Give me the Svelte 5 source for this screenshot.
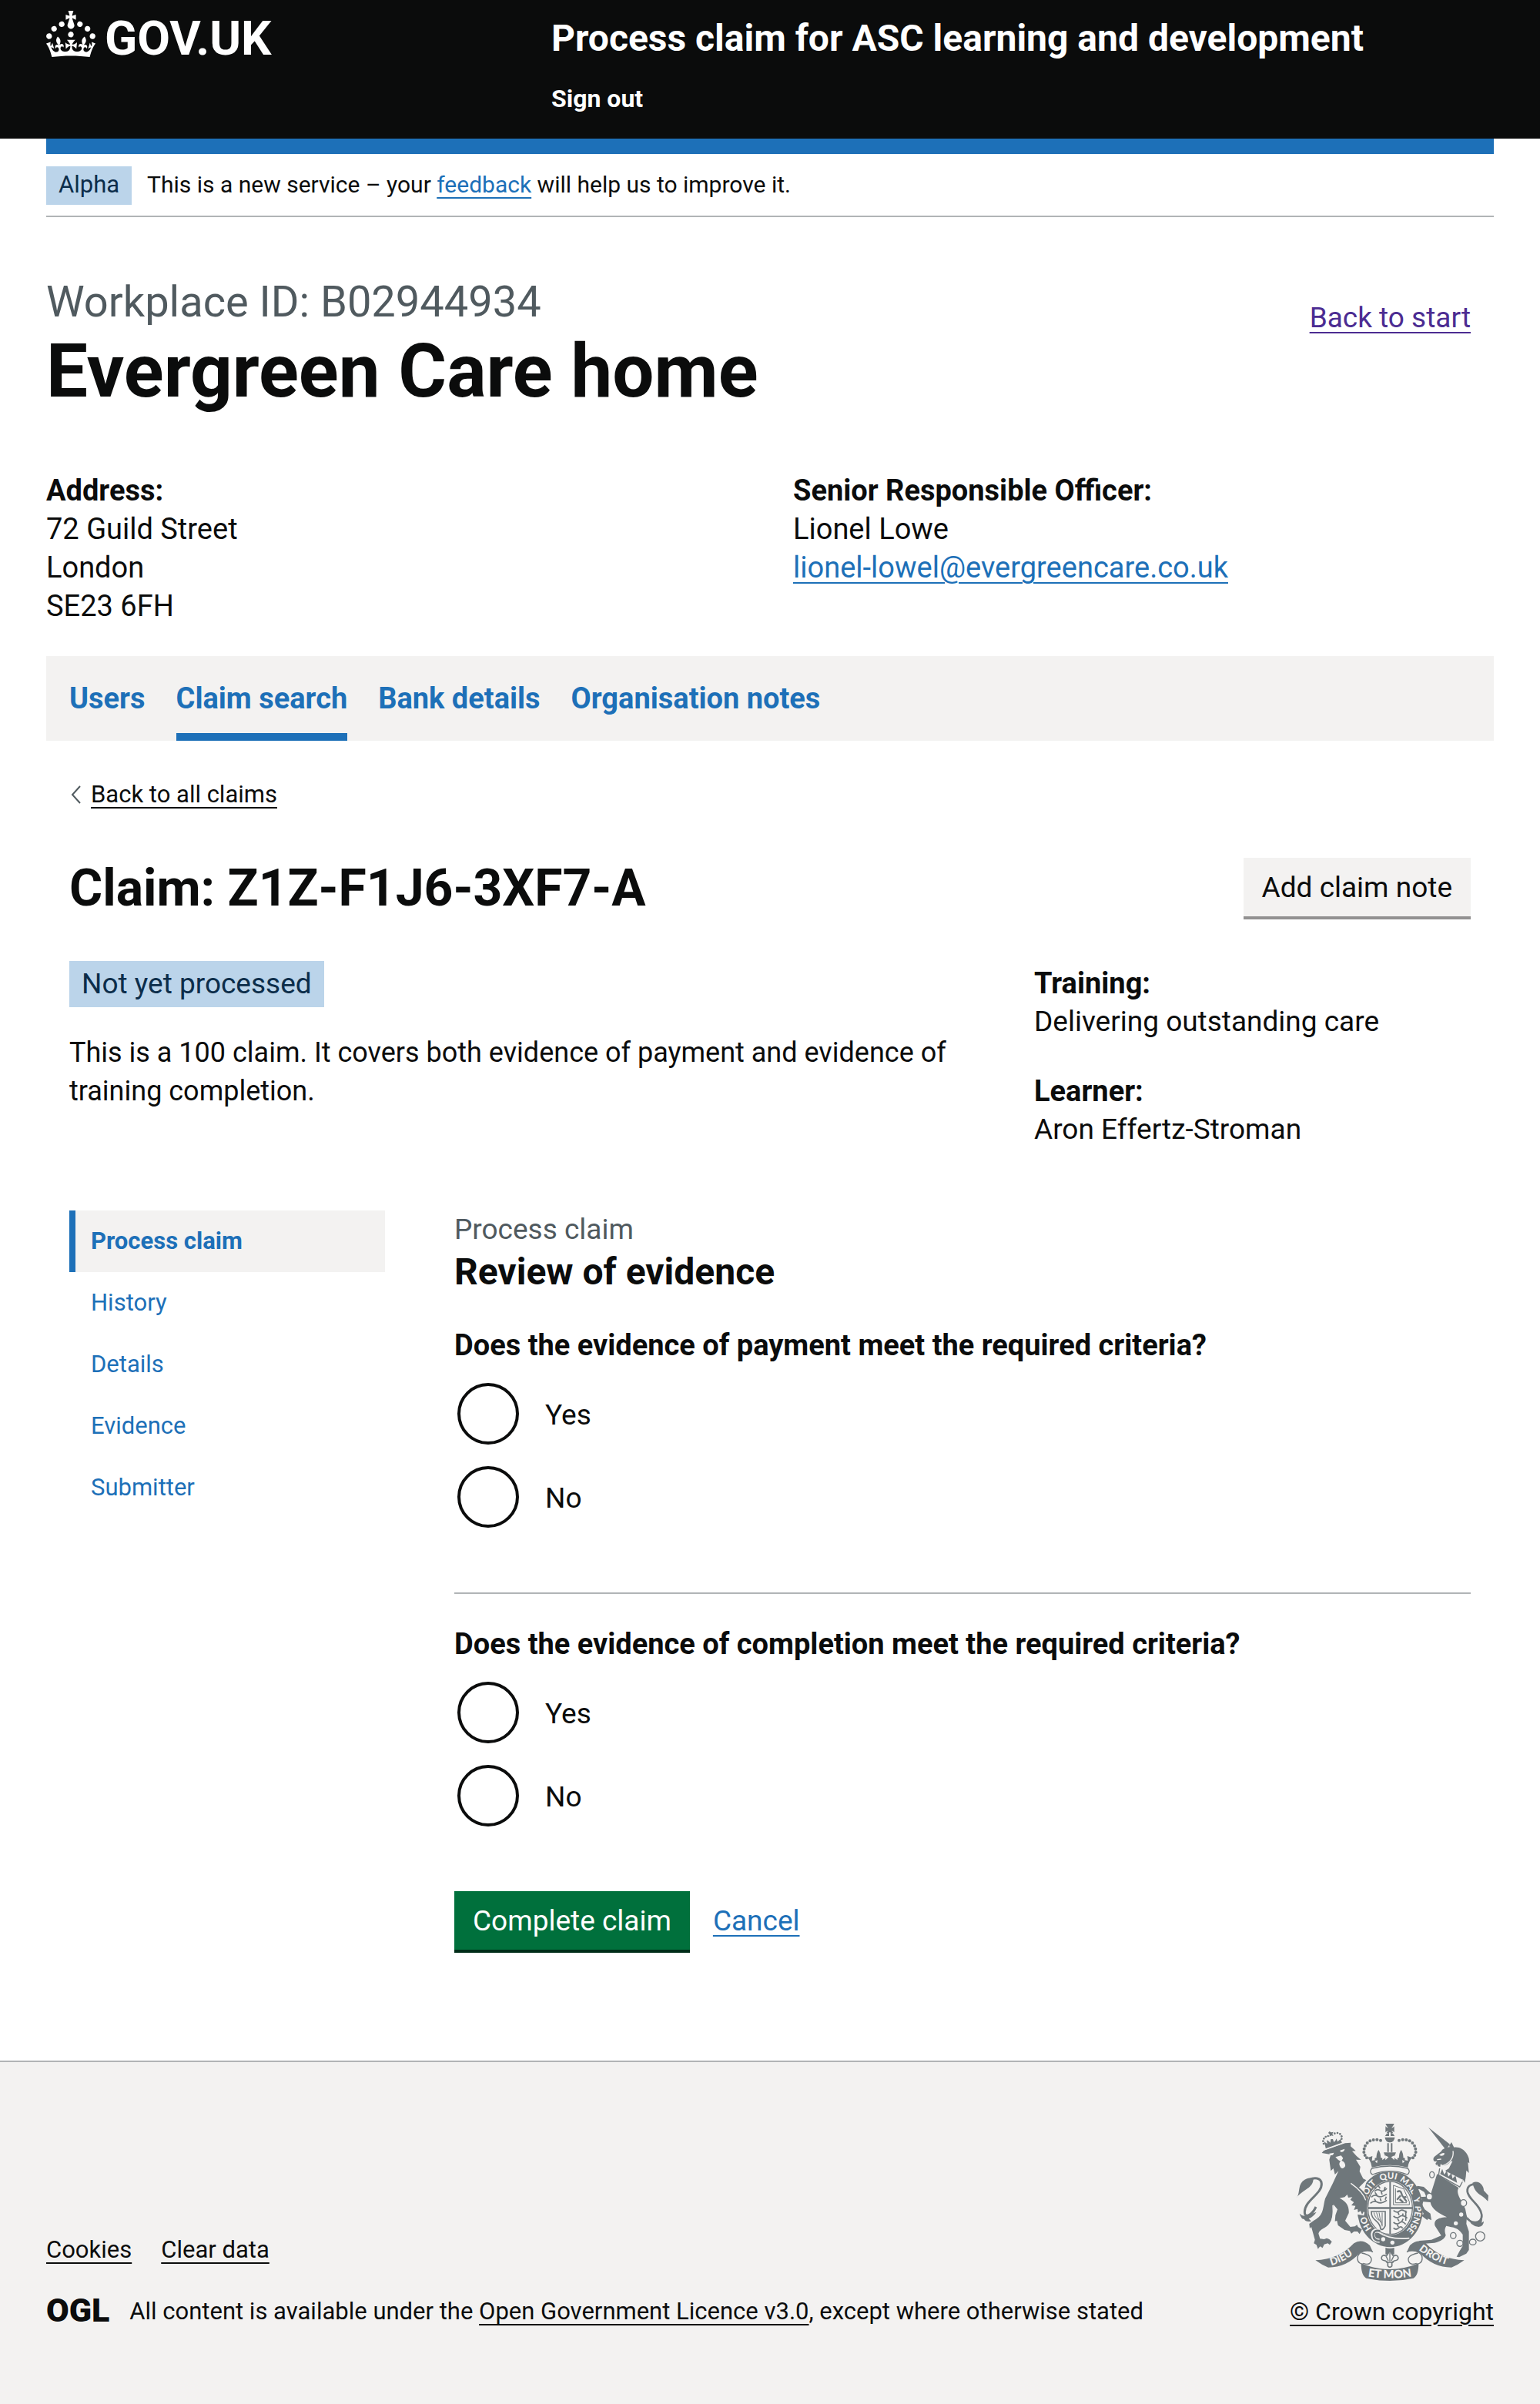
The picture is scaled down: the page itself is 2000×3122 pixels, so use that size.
<script>
  const sections = ['Users', 'Claim search', 'Bank details', 'Organisation notes'];
  const pages = ['Process claim', 'History', 'Details', 'Evidence', 'Submitter'];
  const questions = [
    { name: 'payment', text: 'Does the evidence of payment meet the required criteria?' },
    { name: 'completion', text: 'Does the evidence of completion meet the required criteria?' }
  ];
  const options = ['Yes', 'No'];
  const motto = [['HO', 83], ['SOIT', 199], ['QUI', 295], ['MAL', 370], ['Y', 459], ['PENSE', 490]];
  const beads = [[402, 119], [388, 116], [374, 117], [361, 121], [350, 129], [342, 140], [338, 152], [337, 165], [341, 177], [348, 187]];
  const smallBeads = [[180, 132], [178, 122], [181, 112], [188, 105], [197, 102], [223, 92], [234, 90], [244, 94], [250, 103], [250, 113]];
</script>

<header class="top">
  <a class="logo" href="#gov">
    <svg viewBox="0 0 32 30" width="64" height="60" aria-hidden="true">
      <path fill="currentColor" d="M22.6 10.4c-1 .4-2-.1-2.4-1-.4-.9.1-2 1-2.4.9-.4 2 .1 2.4 1s-.1 2-1 2.4m-5.9 6.7c-.9.4-2-.1-2.4-1-.4-.9.1-2 1-2.4.9-.4 2 .1 2.4 1s-.1 2-1 2.4m10.8-3.7c-1 .4-2-.1-2.4-1-.4-.9.1-2 1-2.4.9-.4 2 .1 2.4 1s0 2-1 2.4m3.3 4.8c-1 .4-2-.1-2.4-1-.4-.9.1-2 1-2.4.9-.4 2 .1 2.4 1s-.1 2-1 2.4M17 4.7l2.3 1.2V2.5l-2.3.7-.2-.2.9-3h-3.4l.9 3-.2.2c-.1.1-2.3-.7-2.3-.7v3.4L15 4.7c.1.1.1.2.2.2l-1.3 4c-.1.2-.1.4-.1.6 0 1.1.8 2 1.9 2.2h.7c1-.2 1.9-1.1 1.9-2.1 0-.2 0-.4-.1-.6l-1.3-4c-.1-.2 0-.2.1-.3m-7.6 5.7c.9.4 2-.1 2.4-1 .4-.9-.1-2-1-2.4-.9-.4-2 .1-2.4 1s0 2 1 2.4m-5 3c.9.4 2-.1 2.4-1 .4-.9-.1-2-1-2.4-.9-.4-2 .1-2.4 1s.1 2 1 2.4m-3.2 4.8c.9.4 2-.1 2.4-1 .4-.9-.1-2-1-2.4-.9-.4-2 .1-2.4 1s0 2 1 2.4m14.8 11c4.4 0 8.6.3 12.3.8 1.1-4.5 2.4-7 3.7-8.8l-2.5-.9c.2 1.3.3 1.9 0 2.7-.4-.4-.8-1.1-1.1-2.3l-1.2 4c.7-.5 1.3-.8 2-.9-1.1 2.5-2.6 3.1-3.5 3-1.1-.2-1.7-1.2-1.5-2.1.3-1.2 1.5-1.5 2.1-.1 1.1-2.3-.8-3-2-2.3 1.9-1.9 2.1-3.5.6-5.6-2.1 1.6-2.1 3.2-1.2 5.5-1.2-1.4-3.2-.6-2.5 1.6.9-1.4 2.1-.5 1.9.8-.2 1.1-1.7 2.1-3.5 1.9-2.7-.2-2.9-2.1-2.9-3.6.7-.1 1.9.5 2.9 1.9l.4-4.3c-1.1 1.1-2.1 1.4-3.2 1.4.4-1.2 2.1-3 2.1-3h-5.4s1.7 1.9 2.1 3c-1.1 0-2.1-.2-3.2-1.4l.4 4.3c1-1.4 2.2-2 2.9-1.9-.1 1.5-.2 3.4-2.9 3.6-1.9.2-3.4-.8-3.5-1.9-.2-1.3 1-2.2 1.9-.8.7-2.3-1.2-3-2.5-1.6.9-2.2.9-3.9-1.2-5.5-1.5 2-1.3 3.7.6 5.6-1.2-.7-3.1 0-2 2.3.6-1.4 1.8-1.1 2.1.1.2.9-.3 1.9-1.5 2.1-.9.2-2.4-.5-3.5-3 .6 0 1.2.3 2 .9l-1.2-4c-.3 1.1-.7 1.9-1.1 2.3-.3-.8-.2-1.4 0-2.7l-2.9.9C1.3 23 2.6 25.5 3.7 30c3.7-.5 7.9-.8 12.3-.8" />
    </svg>
    <span>GOV.UK</span>
  </a>
  <div class="service">
    <a class="service-name" href="#service">Process claim for ASC learning and development</a>
    <a class="sign-out" href="#sign-out">Sign out</a>
  </div>
</header>

<div class="page">
  <div class="bar"></div>
  <div class="phase">
    <strong class="tag small">Alpha</strong>
    <span>This is a new service – your <a class="link" href="#feedback">feedback</a> will help us to improve it.</span>
  </div>

  <main>
    <div class="org">
      <div>
        <span class="org-id">Workplace ID: B02944934</span>
        <h1>Evergreen Care home</h1>
      </div>
      <a class="link visited" href="#start">Back to start</a>
    </div>

    <div class="contacts">
      <div>
        <strong>Address:</strong>
        <address>72 Guild Street<br />London<br />SE23 6FH</address>
      </div>
      <div>
        <strong>Senior Responsible Officer:</strong>
        <p>Lionel Lowe</p>
        <a class="link" href="#email">lionel-lowel@evergreencare.co.uk</a>
      </div>
    </div>

    <nav class="tabs" aria-label="Organisation">
      {#each sections as section}
        <a href="#section" class:active={section === 'Claim search'}>{section}</a>
      {/each}
    </nav>

    <div class="claim">
      <a class="back" href="#claims">
        <svg viewBox="0 0 16 24" width="16" height="24" aria-hidden="true"><path d="M14 1 4 12l10 11" fill="none" stroke="#505a5f" stroke-width="2" /></svg>
        <span>Back to all claims</span>
      </a>

      <div class="claim-head">
        <h2>Claim: Z1Z-F1J6-3XF7-A</h2>
        <button type="button" class="secondary">Add claim note</button>
      </div>

      <div class="summary">
        <div>
          <strong class="tag">Not yet processed</strong>
          <p class="about">This is a 100 claim. It covers both evidence of payment and evidence of training completion.</p>
        </div>
        <dl>
          <div><dt>Training:</dt><dd>Delivering outstanding care</dd></div>
          <div><dt>Learner:</dt><dd>Aron Effertz-Stroman</dd></div>
        </dl>
      </div>

      <div class="work">
        <nav class="side" aria-label="Claim">
          {#each pages as page}
            <a href="#page" class:active={page === 'Process claim'}>{page}</a>
          {/each}
        </nav>

        <form onsubmit={(e) => e.preventDefault()}>
          <span class="caption">Process claim</span>
          <h3>Review of evidence</h3>
          {#each questions as q}
            <fieldset>
              <legend>{q.text}</legend>
              <div class="radios">
                {#each options as option}
                  <div class="radio">
                    <input type="radio" id="{q.name}-{option}" name={q.name} value={option} />
                    <label for="{q.name}-{option}">{option}</label>
                  </div>
                {/each}
              </div>
            </fieldset>
          {/each}
          <div class="actions">
            <button type="submit">Complete claim</button>
            <a class="link" href="#cancel">Cancel</a>
          </div>
        </form>
      </div>
    </div>
  </main>
</div>

<footer>
  <div class="meta">
    <div class="meta-links">
      <a href="#cookies">Cookies</a>
      <a href="#clear">Clear data</a>
    </div>
    <div class="licence">
      <span class="ogl">OGL</span>
      <span>All content is available under the <a href="#licence">Open Government Licence v3.0</a>, except where otherwise stated</span>
    </div>
  </div>
  <a class="copyright" href="#copyright">
    <svg class="crest" viewBox="72 54 750 612" width="250" height="204" aria-hidden="true">
      <defs>
        <path id="garter" d="M439 499A97 115 0 0 1 342 384A97 115 0 0 1 439 269A97 115 0 0 1 536 384A97 115 0 0 1 439 499" />
        <path id="scroll-mid" d="M346 648Q438 664 530 648" />
        <path id="scroll-left" d="M210 606Q264 592 318 546" />
        <path id="scroll-right" d="M550 546Q604 590 684 610" />
      </defs>
      <g class="ink">
        <!-- garter and shield -->
        <ellipse cx="439" cy="386" rx="128" ry="149" />
        <ellipse class="paper" cx="439" cy="382" rx="91" ry="107" />
        <ellipse class="line" cx="439" cy="382" rx="87" ry="103" stroke-width="4" />
        <path d="M436 280h6v205h-6zM352 379h175v7H352z" />
        <path class="line" stroke-width="5" d="M378 318q10-12 22-4t26-8M384 308l-6-10M400 306l-8-12M420 300l-4 12M366 340q12-12 24-4t36-8M388 332l-8-10M408 330l-4-12M362 364q14-12 28-4t36-8M384 358l-6-12M404 356l-4-12M420 350l4-12" />
        <path class="line" stroke-width="5" d="M452 392q14 12 24 2t28 6M452 414q14 12 24 2t30 6M452 438q14 12 24 2t24 6M452 460q10 10 20 0t16 2M470 400l4 10M490 404l-4 10M468 424l6 10M490 424l-6 12M466 448l6 8M500 392v40" />
        <path class="line" stroke-width="3" d="M452 294l40 14 22 50v12h-62zM460 306v56h44" />
        <path class="line" stroke-width="7" d="M466 320q14-10 18 8t18 10M480 334l-14 16M492 342l12 16M476 348l14 12" />
        <path class="line" stroke-width="5" d="M366 396h54v56q-10 20-18 12c-2-36-38-30-36-68z" />
        <path class="line" stroke-width="3" d="M376 400q4 22 20 30M386 400q4 22 18 40M396 400q2 22 12 50M408 400v54" />
        <!-- garter buckle -->
        <path class="cutline" stroke-width="5" d="M392 476q46 32 122 24" />
        <path class="cutline" stroke-width="16" d="M398 472q-28-6-26 16t26 22" />
        <path class="line" stroke-width="8" d="M400 472q-26-6-26 16t26 22" />
        <circle class="paper" cx="412" cy="504" r="8" /><circle class="paper" cx="448" cy="517" r="8" />
        {#each motto as [word, offset]}
          <text class="cut" font-size="34"><textPath href="#garter" startOffset={offset}>{word}</textPath></text>
        {/each}

        <!-- crown -->
        <path d="M421 54h34q-8 16-12 17 10-1 12-7v24q-4-6-12-7 4 1 8 10h-26q4-9 8-10-8 1-12 7V64q4 6 12 7-4-1-12-17z" />
        <circle cx="438" cy="108" r="19" />
        <path class="paper" d="M418 102h40v5h-40zM435 88h6v18h-6z" />
        <path d="M428 130h6v34h-6zM442 130h6v34h-6z" />
        {#each beads as [x, y]}
          <circle cx={x} cy={y} r="6" /><circle cx={876 - x} cy={y} r="6" />
        {/each}
        <path d="M352 186l18-6-2 18 12-2q-4-10 6-10-2-14 8-30 10 16 8 30 10 0 6 10l14-10-8-20h48l-8 20 14 10q-4-10 6-10-2-14 8-30 10 16 8 30 10 0 6 10l12 2-2-18 18 6q-14 18-16 38-70-18-140 0-2-20-16-38z" />
        <path class="paper" d="M420 178l13 6-12 12zM456 178l-13 6 12 12zM380 200l10-4-2 12zM496 200l-10-4 2 12z" />
        <path class="paper" d="M368 228q70-18 140 0 12 14-4 26-66-26-132 0-16-12-4-26z" />
        <path class="line" stroke-width="4" d="M368 228q70-18 140 0 12 14-2 24-66-26-136 0-14-10-2-24z" />

        <!-- lion -->
        <path class="halo" d="M345 268l-30 32q30 40 26 70l-8 36-24-4z" />
        <path d="M173 168l8-10 82-28 23-2-1 14 20 18-14 1 18 20 17 14-20-1 17 28-3 18 14 28 12 6-28 28c14 12 32 26 32 52l-2 30-4 22-8-10-6 12-6-14-10 6-2-14-14 4 6-16-16-2 10-12-14-10 8-10-16 2-4-12-10 10-20 4c26 12 38 30 36 58l-14 30 20 24 18-2 8-6 4 8 15 10-9 18-8-10-14 0-10 8-6-10-20-4-26-18-4-18-8 2 2-24 8-22-16-20c0 34-2 54-14 72-16 24-40 22-44 42l6 20 16 2 10-4 10 4 10 10-8 12-8-6-14 4-6 14-10-6-8 10-6-16-10-6 4-14-14-50-6 6-2-18 20-14c38-20 32-48 42-84l30-60 22-48-14 14-6-24-10 10-6-44 6-20z" />
        <path class="paper" d="M202 170l18-3q-3 14-16 9zM244 158l18-6q-2 14-16 12zM226 184l22-6 8 10-6 10q16 6 14 22-8 14-18 4-10-14 0-24-8-2-20-16z" />
        <path class="cutline" stroke-width="4" d="M286 286q48 34 58 66M216 372q4 50-10 74" />
        <path class="line" stroke-width="9" d="M150 378c-14 30-44 48-44 20 0-46 68-70 66-110-2-26-30-24-48-16" />
        <path d="M72 344c18-14 6-46 26-66 20-16 34-14 42-8-2 36-38 38-68 74zM86 404q14 14 32 6l34-12q-12 18-30 26l10 10q-22 4-28-8l-8-2q-6-8-10-20z" />
        <!-- lion crown -->
        <path d="M182 124l12 8-2-14 8 4 6 6 2-14h8l4 12 6-6 4-8 4 12 12-10 6 16-63 23z" />
        <path class="cutline" stroke-width="4" d="M180 156l84-30" />
        <path d="M202 84l8 4 8-2-4 8 4 8-8-2-8 4 2-8-6-6z" />
        {#each smallBeads as [x, y]}<circle cx={x} cy={y} r="4" />{/each}

        <!-- unicorn -->
        <path d="M588 68l84 66-14 18-8-4z" />
        <path d="M668 142l10-16 10 20c34-4 54 26 58 44l2 18-6-4 4 42-10-10-2 24-4 24-8-14-2 16-74-44 22-14 14-28q-8-2-14 8c-10 10-24 12-32 2l-2 12-8-2-4-8-4 4-2-8 6-6-12-2q-6-10 2-18l26-20q6-14 36-18z" />
        <path class="paper" d="M630 176q14-12 22-6-6 14-22 6z" />
        <path class="cutline" stroke-width="4" d="M684 160q6 40-42 58M622 194l16-2" />
        <path class="paper" d="M630 226l92 46-10 28-88-48z" />
        <path class="line" stroke-width="4" d="M632 228l-4 26 82 46 10-18" />
        <path d="M634 250l8-20 8 22 10-14 6 22 12-14 4 22 12-12 6 28z" />
        <path d="M622 250l84 54c-14 22 16 54 26 82l6 30-2 28 10 30v72l-10 14-28 14-10-2 12-22 12-20v-44c-20-30-34-26-64-34-8 12-6 24-2 36-4 14-20 24-44 30l-48 4-14 14-20-2 12-16 12-8 46-4 38-16-24-38c-8-26 20-32 46-34-30-14-60-32-64-58l-28-2-4 12 10 18 22 16 4 26-14-6-2 6-16-12-8-8 10-4-22-46 16-12-10-8 26-2-8-18-20-12-14 10-10 2 2-12 16-12 24 4 28 26z" />
        <path class="line" stroke-width="8" d="M730 410c20 40 68 36 66 0-4-40-52-60-56-92-2-28 26-32 44-24" />
        <path d="M760 284c26-12 44 12 44 30l18 20-2 22c-28-32-48-22-60-72zM742 418q14 22 34 20l22-14-2 16 8-6q0 18-20 22-36-4-42-38z" />
        <ellipse class="ring" cx="602" cy="253" rx="9" ry="12" /><ellipse class="ring" cx="592" cy="338" rx="12" ry="13" />
        <ellipse class="ring" cx="725" cy="363" rx="12" ry="13" /><ellipse class="ring" cx="685" cy="490" rx="11" ry="12" />
        <circle class="ring" cx="711" cy="520" r="12" /><ellipse class="ring" cx="761" cy="515" rx="13" ry="11" /><circle class="ring" cx="790" cy="493" r="18" />
        <circle class="paper" cx="716" cy="408" r="8" /><circle class="paper" cx="695" cy="442" r="8" /><circle class="paper" cx="576" cy="282" r="6" />

        <!-- scrolls -->
        <path d="M148 586q90-2 150-66 30-20 62 8l12 26q-28-8-52 4-50 56-122 56-26-10-50-28z" />
        <path d="M728 586q-90-2-150-66-30-20-62 8l-12 26q28-8 52 4 50 56 122 56 26-10 50-28z" />
        <path class="line" stroke-width="4" d="M372 554c-18-14-60-2-60 24 0 18 14 24 22 22M328 558c30 6 44 16 36 34q-6 14-30 6" />
        <path class="line" stroke-width="4" d="M504 554c18-14 60-2 60 24 0 18-14 24-22 22M548 558c-30 6-44 16-36 34q6 14 30 6" />
        <path d="M326 598q112 46 224 0 0 48-20 58-92 20-184 0-20-10-20-58z" />
        <text class="cut" font-size="40"><textPath href="#scroll-left">DIEU</textPath></text>
        <text class="cut" font-size="40"><textPath href="#scroll-right">DROIT</textPath></text>
        <text class="cut" font-size="44"><textPath href="#scroll-mid" startOffset="50%" text-anchor="middle">ET MON</textPath></text>
        <!-- badge -->
        <path d="M421 537q16 6 34 0v26h-34z" />
        <path class="paper line" stroke-width="5" d="M438 550l14 20q14-8 18 4t-14 14l-10 6v14q-8 10-16 0v-14l-10-6q-18-2-14-14t18-4z" />
        <path class="line" stroke-width="4" d="M438 556v34M424 572l8 16M452 572l-8 16M424 594h28" />
      </g>
    </svg>
    <span>© Crown copyright</span>
  </a>
</footer>

<style>
  :global(body) {
    background: #f3f2f1;
    color: #0b0c0c;
    font-family: Roboto, 'Liberation Sans', sans-serif;
    font-size: 37px;
    line-height: 50px;
  }
  h1, h2, h3, p, dl, dd, fieldset, legend { margin: 0; padding: 0; border: 0; }
  address { font-style: normal; }
  a { color: inherit; }
  .top {
    display: grid;
    grid-template-columns: 656fr 1224fr;
    padding: 14px 60px 32px;
    background: #0b0c0c;
    color: #fff;
  }
  .top a { text-decoration: none; font-weight: 700; }
  .logo { display: flex; align-items: flex-end; gap: 12px; height: 60px; font-size: 62px; line-height: 48px; }
  .service { display: flex; flex-direction: column; align-items: flex-start; gap: 28px; padding-top: 6px; }
  .service-name { font-size: 48px; line-height: 60px; }
  .sign-out { font-size: 32px; line-height: 40px; }
  .page { padding: 0 60px 140px; background: #fff; }
  .bar { height: 20px; background: #1d70b8; }
  .phase {
    display: flex;
    gap: 20px;
    padding: 16px 0 14px;
    border-bottom: 2px solid #b1b4b6;
    font-size: 30px;
    line-height: 48px;
  }
  strong, dt, legend { font-size: 38px; font-weight: 700; }
  strong { display: block; }
  .tag {
    width: max-content;
    padding: 0 16px;
    background: #bbd4ea;
    color: #0c2d4a;
    font-size: 37px;
    font-weight: 400;
    line-height: 60px;
  }
  .tag.small { padding-bottom: 2px; font-size: 31px; line-height: 48px; }
  .link, .back span, footer a {
    text-decoration: underline;
    text-decoration-thickness: 2px;
    text-underline-offset: 6px;
  }
  .link { color: #1d70b8; }
  .visited { color: #4c2c92; }

  .org { display: flex; justify-content: space-between; padding-top: 80px; }
  .org-id { display: block; margin-bottom: 10px; color: #505a5f; font-size: 56px; line-height: 60px; }
  h1 { font-size: 96px; line-height: 100px; }
  .org .link { margin: 26px 30px 0 0; }
  .contacts {
    display: grid;
    grid-template-columns: 1fr 1fr;
    gap: 60px;
    padding: 80px 0 40px;
    font-size: 38px;
  }

  .tabs { display: flex; gap: 40px; padding: 0 30px; background: #f3f2f1; }
  .tabs a { color: #1d70b8; font-size: 38px; font-weight: 700; line-height: 110px; text-decoration: none; }
  .tabs .active { box-shadow: inset 0 -10px #1d70b8; }

  .claim { padding: 50px 30px 0; }
  .back { display: flex; align-items: center; gap: 12px; width: max-content; font-size: 31px; line-height: 40px; text-decoration: none; }
  .claim-head { display: flex; justify-content: space-between; align-items: flex-start; margin: 62px 0 54px; }
  h2 { font-size: 66px; line-height: 80px; }
  button {
    padding: 2px 24px 0;
    border: 0;
    border-bottom: 4px solid #002d18;
    background: #00703c;
    color: #fff;
    font: inherit;
    line-height: 74px;
  }
  .secondary { border-color: #929191; background: #f3f2f1; color: #0b0c0c; }
  .summary { display: grid; grid-template-columns: 1193fr 567fr; gap: 60px; margin-bottom: 80px; }
  .about { margin-top: 34px; font-size: 36px; }
  dl { display: flex; flex-direction: column; gap: 40px; padding-top: 4px; }

  .work { display: grid; grid-template-columns: 410fr 1320fr; gap: 90px; }
  .side { display: flex; flex-direction: column; }
  .side a {
    padding-left: 20px;
    border-left: 8px solid transparent;
    color: #1d70b8;
    font-size: 31px;
    line-height: 80px;
    text-decoration: none;
  }
  .side .active { border-color: #1d70b8; background: #f3f2f1; font-weight: 700; }
  .caption { display: block; color: #505a5f; }
  h3 { margin-bottom: 40px; font-size: 48px; line-height: 60px; }
  fieldset { min-width: 0; }
  fieldset + fieldset { margin-top: 80px; padding-top: 40px; border-top: 2px solid #b1b4b6; }
  legend { float: left; width: 100%; margin-bottom: 24px; }
  .radios { clear: both; display: flex; flex-direction: column; gap: 24px; }
  .radio { display: flex; gap: 34px; padding-left: 4px; }
  .radio input {
    appearance: none;
    width: 80px;
    height: 80px;
    margin: 0;
    border: 4px solid #0b0c0c;
    border-radius: 50%;
    background: #fff;
  }
  .radio input:checked { box-shadow: inset 0 0 0 16px #fff; background: #0b0c0c; }
  .radio label { line-height: 84px; }
  .actions { display: flex; align-items: baseline; gap: 30px; margin-top: 80px; }

  footer {
    display: flex;
    justify-content: space-between;
    align-items: flex-end;
    padding: 80px 60px 100px;
    border-top: 2px solid #b1b4b6;
    background: #f3f2f1;
    font-size: 31px;
    line-height: 40px;
  }
  .meta { display: grid; gap: 40px; }
  .meta-links { display: flex; gap: 38px; }
  .licence { display: flex; gap: 26px; }
  .ogl { font-size: 43px; font-weight: 900; line-height: 36px; }
  .copyright { display: flex; flex-direction: column; align-items: center; gap: 20px; font-size: 32px; }
  .ink { fill: #6f777b; }
  .paper { fill: #f3f2f1; }
  .line { fill: none; stroke: #6f777b; }
  .paper.line { fill: #f3f2f1; }
  .halo { fill: #f3f2f1; stroke: #f3f2f1; stroke-width: 10; }
  .cutline { fill: none; stroke: #f3f2f1; }
  .ring { fill: #f3f2f1; stroke: #6f777b; stroke-width: 4; }
  .cut { fill: #f3f2f1; font-family: Lato, sans-serif; font-weight: 900; }
</style>
